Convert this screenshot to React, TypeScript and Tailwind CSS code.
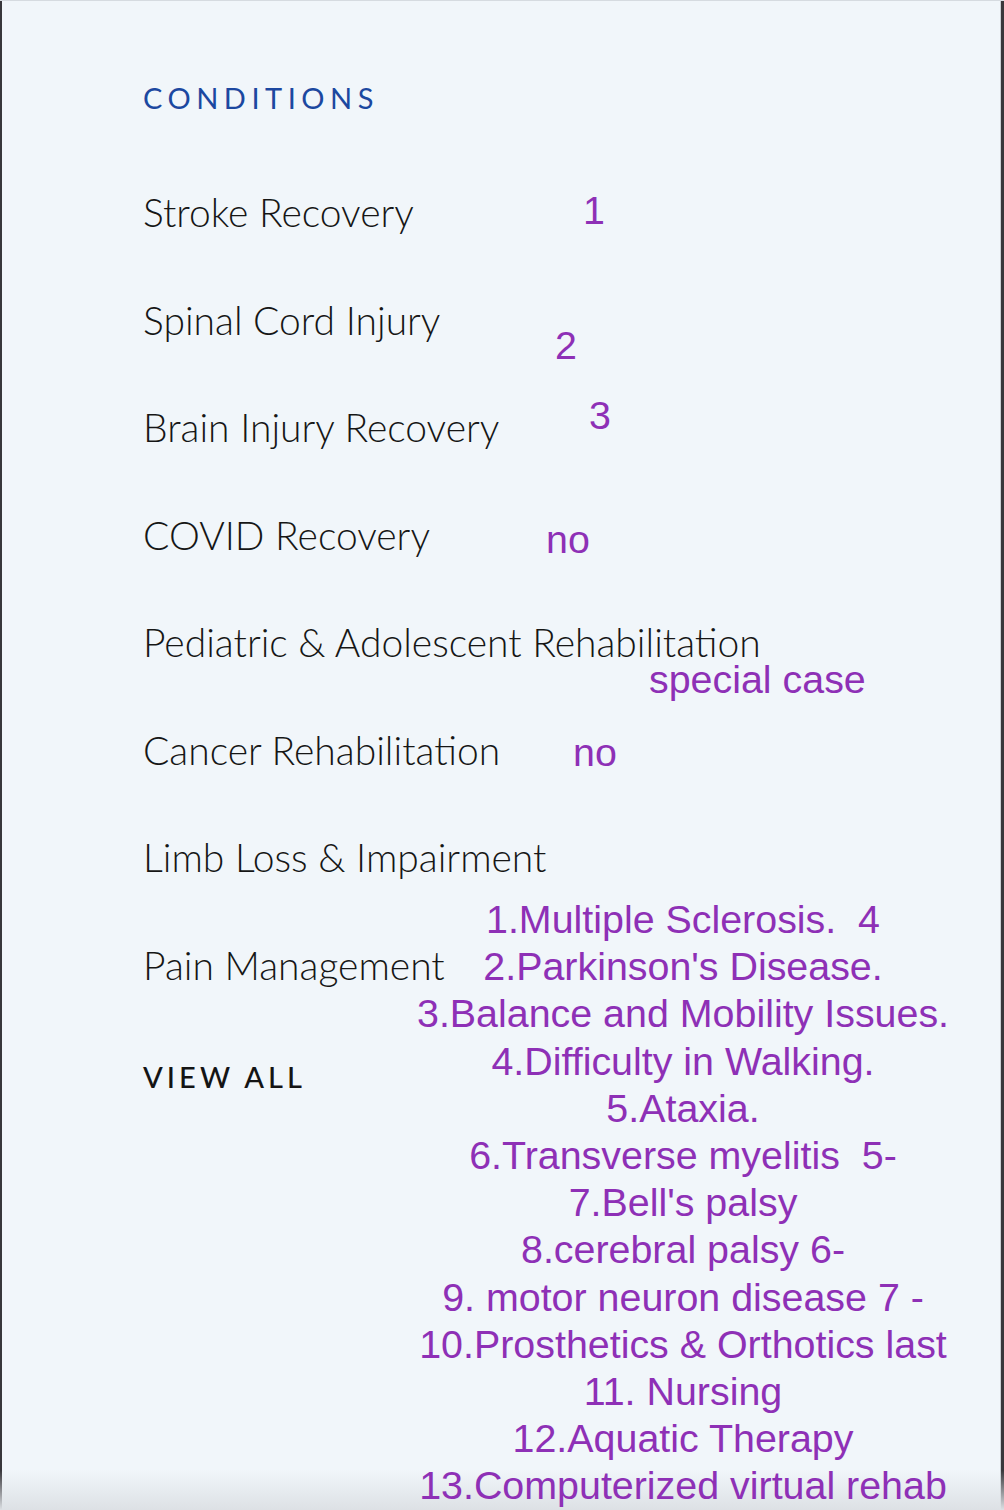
import React from 'react';

// Left column conditions list
const conditions = [
  'Stroke Recovery',
  'Spinal Cord Injury',
  'Brain Injury Recovery',
  'COVID Recovery',
  'Pediatric & Adolescent Rehabilitation',
  'Cancer Rehabilitation',
  'Limb Loss & Impairment',
  'Pain Management',
];

// Handwritten-style review notes laid over the menu
const notes = [
  "1.Multiple Sclerosis.  4",
  "2.Parkinson's Disease.",
  '3.Balance and Mobility Issues.',
  '4.Difficulty in Walking.',
  '5.Ataxia.',
  '6.Transverse myelitis  5-',
  "7.Bell's palsy",
  '8.cerebral palsy 6-',
  '9. motor neuron disease 7 -',
  '10.Prosthetics & Orthotics last',
  '11. Nursing',
  '12.Aquatic Therapy',
  '13.Computerized virtual rehab',
];

const noteFont = { fontFamily: '"Liberation Sans", Arial, sans-serif' };
const menuFont = { fontFamily: 'Lato, "Noto Sans", sans-serif' };

const App = () => {
  return (
    <div className="relative w-[1004px] h-[1510px] overflow-hidden bg-[#f1f6fa] border-t border-[#d6dbe0]">
      {/* window edges */}
      <div className="absolute left-0 top-0 h-full w-[2px] bg-[#38373b]" />
      <div className="absolute right-0 top-0 h-full w-[4px] bg-[#38373b] border-l border-[#c9ced3]" />
      <div className="absolute left-0 bottom-0 w-full h-[40px] bg-gradient-to-b from-transparent to-[#dde1e5]" />

      <div className="flex flex-col items-start pl-[143px] pt-[79px]" style={menuFont}>
        <h2 className="text-[29px] leading-[35px] tracking-[0.19em] text-[#1c48a0] font-normal">
          CONDITIONS
        </h2>
        <ul className="flex flex-col mt-[44px]">
          {conditions.map((c) => (
            <li key={c} className="h-[107.5px] text-[39px] leading-[107.5px] font-light text-[#161616]">
              {c}
            </li>
          ))}
        </ul>
        <a className="mt-[40px] text-[29px] leading-[35px] tracking-[0.14em] text-[#141414] font-medium">
          VIEW ALL
        </a>
      </div>

      <div className="text-[39.4px] leading-[47.2px] text-[#8e30b6]" style={noteFont}>
        <span className="absolute left-[583px] top-[186px]">1</span>
        <span className="absolute left-[555px] top-[321px]">2</span>
        <span className="absolute left-[589px] top-[391px]">3</span>
        <span className="absolute left-[546px] top-[515px]">no</span>
        <span className="absolute left-[649px] top-[655px]">special case</span>
        <span className="absolute left-[573px] top-[728px]">no</span>
        <div className="absolute left-[383px] top-[895px] w-[600px] flex flex-col items-center whitespace-pre">
          {notes.map((n) => (
            <div key={n}>{n}</div>
          ))}
        </div>
      </div>
    </div>
  );
};

export default App;
